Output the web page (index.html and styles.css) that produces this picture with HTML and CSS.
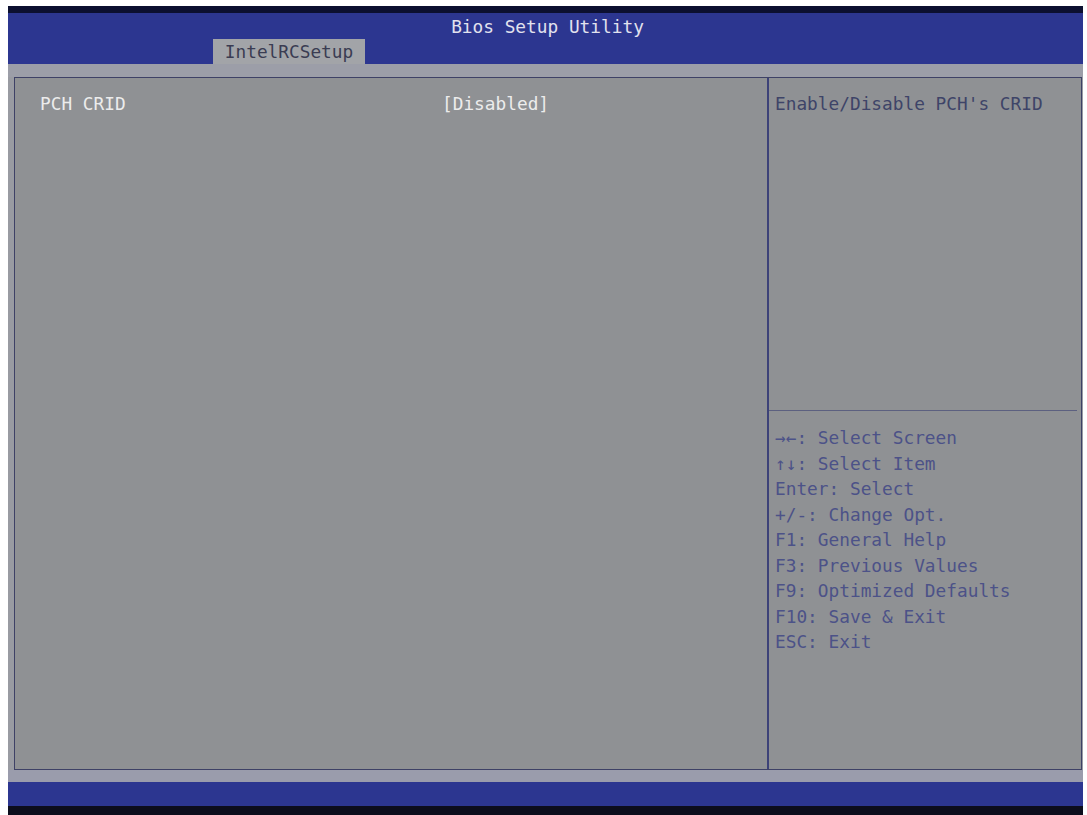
FILE: index.html
```html
<!DOCTYPE html>
<html lang="en">
<head>
	<meta charset="UTF-8">
	<title>Bios Setup Utility</title>
	<link rel="stylesheet" href="styles.css">
</head>
<body>
<div class="screen">
	<!-- 顶部标题栏 -->
	<div class="topline"></div>
	<div class="header">
		<div class="title">Bios Setup Utility</div>
		<div class="tabs">
			<span class="tab">IntelRCSetup</span>
		</div>
	</div>
	<div class="strip"></div>
	<!-- 主面板 -->
	<div class="panel">
		<div class="left">
			<div class="row">
				<span class="label">PCH CRID</span>
				<span class="value">[Disabled]</span>
			</div>
		</div>
		<div class="right">
			<div class="desc">Enable/Disable PCH's CRID</div>
			<div class="keys">
				<div>→←: Select Screen</div>
				<div>↑↓: Select Item</div>
				<div>Enter: Select</div>
				<div>+/-: Change Opt.</div>
				<div>F1: General Help</div>
				<div>F3: Previous Values</div>
				<div>F9: Optimized Defaults</div>
				<div>F10: Save &amp; Exit</div>
				<div>ESC: Exit</div>
			</div>
		</div>
	</div>
	<div class="strip bottom"></div>
	<div class="footer"></div>
	<div class="baseline"></div>
</div>
</body>
</html>
```

FILE: styles.css
```css
body {
	margin: 0;
	padding: 0;
	background-color: #fff;
	font-family: "DejaVu Sans Mono", "Liberation Mono", monospace;
	font-size: 17.8px;
}

.screen {
	margin: 6px 4px 0 8px;
	height: 809px;
	display: flex;
	flex-direction: column;
	background-color: #999ba2;
}

.topline {
	height: 7px;
	background-color: #0c1030;
}

.header {
	height: 51px;
	background-color: #2c3690;
	display: flex;
	flex-direction: column;
	justify-content: space-between;
}

.title {
	text-align: center;
	color: #e2e2ee;
	line-height: 18px;
	padding-top: 5px;
	padding-left: 4px;
}

.tabs {
	padding-left: 205px;
	height: 25px;
}

.tab {
	display: inline-block;
	width: 152px;
	height: 25px;
	line-height: 26px;
	text-align: center;
	background-color: #a2a4a8;
	color: #3a3c52;
}

.strip {
	height: 13px;
	background-color: #9c9ea8;
}

.panel {
	height: 691px;
	margin: 0 1px 0 6px;
	border: 1px solid #3e4166;
	background-color: #8f9194;
	display: flex;
}

.left {
	width: 754px;
	border-right: 2px solid #3d4278;
	padding: 13px 0 0 25px;
	box-sizing: border-box;
}

.row {
	display: flex;
	line-height: 26px;
	color: #ececec;
}

.label {
	width: 402px;
}

.right {
	flex: 1;
	display: flex;
	flex-direction: column;
}

.desc {
	height: 319px;
	padding: 13px 0 0 6px;
	line-height: 26px;
	color: #3e4468;
	border-bottom: 1px solid #5c6080;
	margin-right: 4px;
}

.keys {
	padding: 14px 0 0 6px;
	line-height: 25.5px;
	color: #4c5288;
}

.strip.bottom {
	height: 12px;
	background-color: #9a9cac;
}

.footer {
	height: 24px;
	background-color: #2c3690;
}

.baseline {
	flex: 1;
	background-color: #0c0d1c;
}
```
